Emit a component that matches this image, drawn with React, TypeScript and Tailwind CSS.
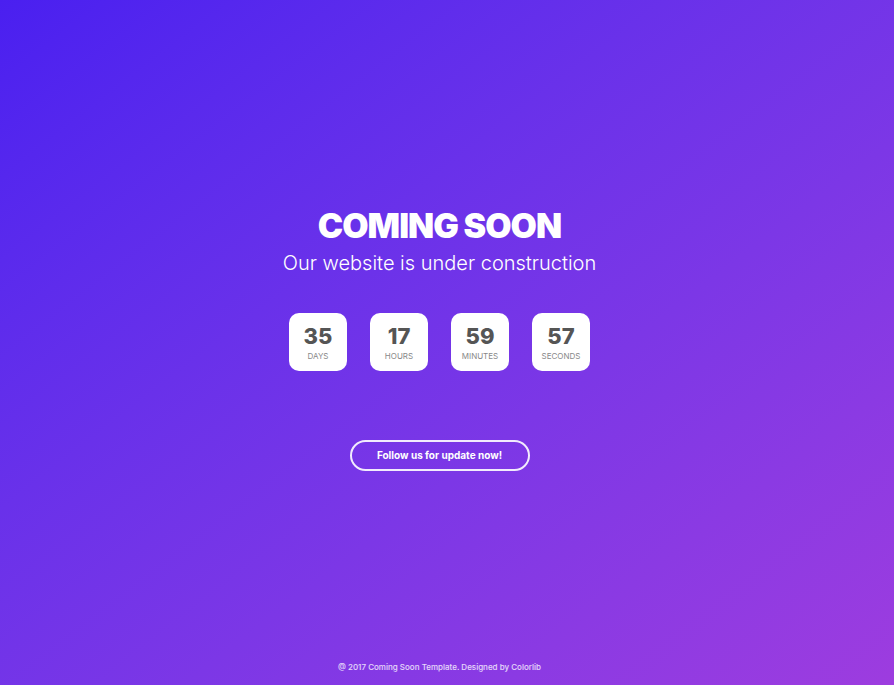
const units = [
  { value: "35", label: "Days" },
  { value: "17", label: "Hours" },
  { value: "59", label: "Minutes" },
  { value: "57", label: "Seconds" },
];

export default function App() {
  return (
    <div className="flex h-[685px] w-full flex-col items-center bg-gradient-to-br from-[#4a1ff0] to-[#9d3cdf] pr-[15px] font-['Inter',sans-serif] text-white">
      <h1 className="mt-[204px] text-[34px] leading-[44px] font-black tracking-[-1px]">
        COMING SOON
      </h1>
      <p className="mt-[1px] text-[20px] leading-[28px] font-light">
        Our website is under construction
      </p>

      {/* countdown */}
      <div className="mt-[36px] flex gap-[23px]">
        {units.map((u) => (
          <div
            key={u.label}
            className="flex h-[58px] w-[58px] flex-col items-center justify-center rounded-[10px] bg-white"
          >
            <span className="text-[22px] leading-[26px] font-extrabold text-[#555]">
              {u.value}
            </span>
            <span className="mt-[2px] text-[8px] leading-[10px] uppercase text-[#888]">
              {u.label}
            </span>
          </div>
        ))}
      </div>

      <button className="mt-[69px] h-[31px] w-[180px] rounded-full border-2 border-white/90 text-[10px] font-bold">
        Follow us for update now!
      </button>

      <p className="mt-auto mb-[13px] text-[8px] leading-[10px] font-medium text-white/80">
        @ 2017 Coming Soon Template. Designed by Colorlib
      </p>
    </div>
  );
}
